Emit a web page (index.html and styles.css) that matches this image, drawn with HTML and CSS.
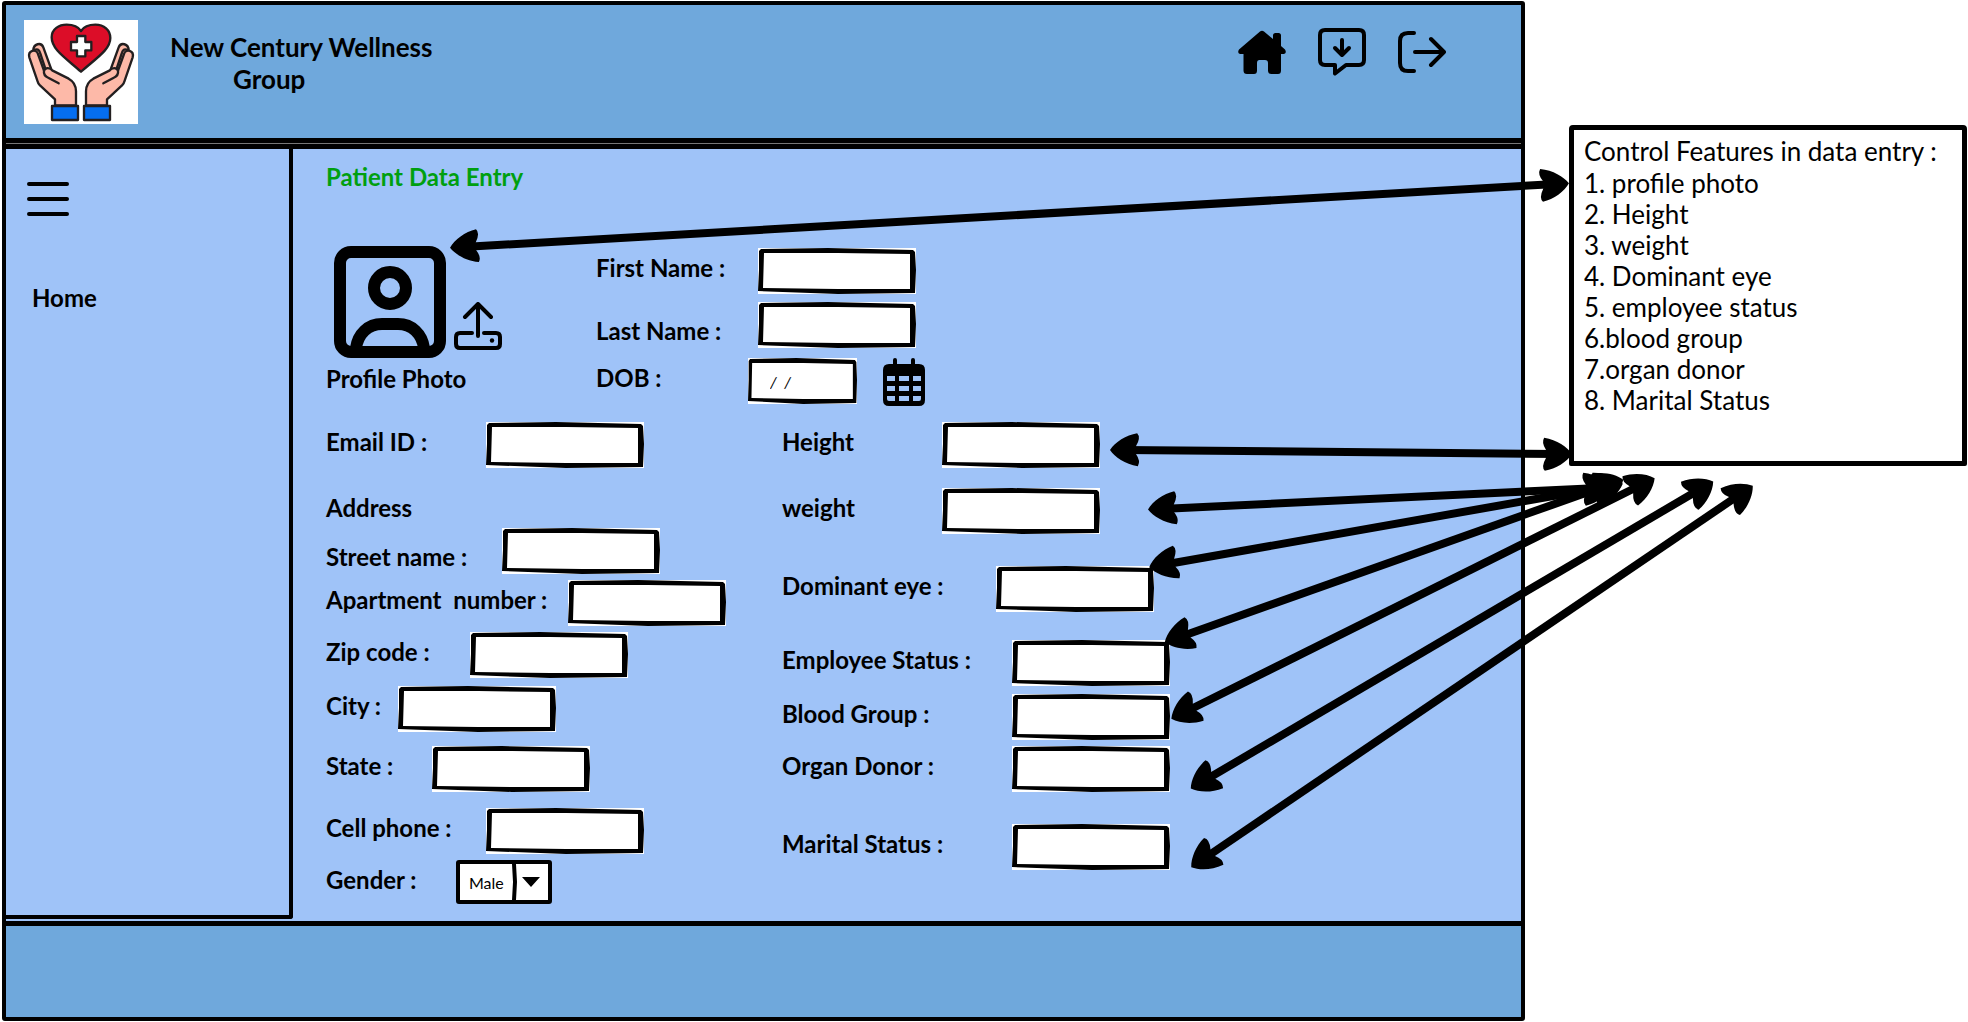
FILE: index.html
```html
<!DOCTYPE html>
<html lang="en">
<head>
<meta charset="utf-8">
<meta name="viewport" content="width=device-width, initial-scale=1">
<title>New Century Wellness Group – Patient Data Entry</title>
<link rel="stylesheet" href="styles.css">
</head>
<body>
<div class="board">
  <div class="app">
    <header class="topbar">
      <svg class="logo" viewBox="0 0 342 312" role="img" aria-label="New Century Wellness Group logo">
        <rect width="342" height="312" fill="#fff"/>
        <g stroke="#231f20" stroke-width="7" stroke-linejoin="round" stroke-linecap="round">
          <path fill="#dc0d28" d="M171 155C122 112 83 88 83 52C83 27 105 14 128 14C148 14 164 22 171 33C178 22 194 14 214 14C240 14 259 30 259 54C259 88 220 112 171 155Z"/>
          <path fill="#fff" d="M159 48h25v18h18v25h-18v18h-25v-18h-18v-25h18z"/>
          <g id="hand">
            <path fill="#fdb9a8" d="M28 92C28 70 52 66 58 82L82 148L60 164L36 100Z"/>
            <path fill="#fdb9a8" d="M93 256V238L48 196Q42 190 40 182L16 112C11 92 36 84 42 102L60 152C64 142 78 142 86 152L134 176Q156 188 156 214V256Z"/>
            <path fill="none" d="M60 152C58 164 64 170 74 174L104 190M30 90Q44 84 48 98L64 146"/>
            <path fill="#056ef0" d="M84 258h78v42h-78z"/>
          </g>
          <use href="#hand" transform="translate(342 0) scale(-1 1)"/>
        </g>
      </svg>
      <p class="brand">New Century Wellness<span class="brand-second">Group</span></p>
      <nav class="actions" aria-label="Account">
        <button type="button" aria-label="Home">
          <svg viewBox="0 0 48 48"><path d="M22 3.600Q24 2 26 3.600L35 11V7.500Q35 5 37.500 5H40.500Q43 5 43 7.500V18L47 21.500Q49 25 46 26H43V42.500Q43 46 40 46H33.500Q30 46 30 42.500V35Q30 32 27 32H21.500Q19 32 19 35V42.500Q19 46 16 46H9Q5.500 46 5.500 42.500V26H2Q-1 25 1 21.500Z"/></svg>
        </button>
        <button type="button" aria-label="Download messages">
          <svg viewBox="0 0 48 48"><path class="line" d="M17 37H7Q2 37 2 32V7Q2 2 7 2H41Q46 2 46 7V32Q46 37 41 37H28L17 45.500Z"/><path class="line" d="M24 12V26M17 20L24 27L31 20"/></svg>
        </button>
        <button type="button" aria-label="Log out">
          <svg viewBox="0 0 48 48"><path class="line" d="M16 5H10Q2 5 2 13V35Q2 43 10 43H16M17 24H45M33 11L46 24L33 37"/></svg>
        </button>
      </nav>
    </header>

    <div class="body">
      <aside class="sidebar">
        <button type="button" class="menu" aria-label="Menu">
          <svg viewBox="0 0 42 36"><path class="line" d="M2 3H40M2 18H40M2 33H40"/></svg>
        </button>
        <a class="nav-link" href="#home">Home</a>
      </aside>

      <main class="content">
        <h1>Patient Data Entry</h1>
        <form>
          <section class="identity">
            <div class="photo">
              <div class="photo-icons">
                <svg class="portrait" viewBox="0 0 112 112" role="img" aria-label="Profile photo"><g fill="none" stroke="#000" stroke-width="12"><rect x="6" y="6" width="100" height="100" rx="11"/><circle cx="56" cy="42" r="16"/><path d="M22 102C24 88 34 78 48 78H64C78 78 88 88 90 102"/></g></svg>
                <button type="button" class="upload" aria-label="Upload photo">
                  <svg viewBox="0 0 48 48"><path class="line" d="M18 31H6Q2 31 2 35V42Q2 46 6 46H42Q46 46 46 42V35Q46 31 42 31H30"/><path class="line" d="M24 34V3M11 15L24 2L37 15"/><circle cx="38" cy="38.500" r="2.200"/></svg>
                </button>
              </div>
              <span class="photo-label">Profile Photo</span>
            </div>
            <div class="names">
              <div class="field"><label class="w-162" for="first">First Name :</label><input class="box" id="first" type="text"></div>
              <div class="field low gap-8"><label class="w-162" for="last">Last Name :</label><input class="box" id="last" type="text"></div>
              <div class="field gap-10">
                <label class="w-152" for="dob">DOB :</label><input class="box date" id="dob" type="text" value="/  /">
                <button type="button" class="calendar" aria-label="Choose date">
                  <svg viewBox="0 0 42 48"><path d="M10 6V2Q10 0 12 0T14 2V6H28V2Q28 0 30 0T32 2V6H36Q42 6 42 12V42Q42 48 36 48H6Q0 48 0 42V12Q0 6 6 6Z"/><path fill="#9fc3f8" d="M4 18h8v5H4zM16 18h10v5H16zM30 18h8v5h-8zM4 28h8v5H4zM16 28h10v5H16zM30 28h8v5h-8zM4 38h8v5H6q-2 0-2-2zM16 38h10v5H16zM30 38h8v3q0 2-2 2h-6z"/></svg>
                </button>
              </div>
            </div>
          </section>

          <div class="columns">
            <div class="column">
              <div class="field"><label class="w-160" for="email">Email ID :</label><input class="box" id="email" type="email"></div>
              <h2 class="gap-20">Address</h2>
              <div class="field low"><label class="w-176" for="street">Street name :</label><input class="box" id="street" type="text"></div>
              <div class="field gap-6"><label class="w-242" for="apt">Apartment&nbsp; number :</label><input class="box" id="apt" type="text"></div>
              <div class="field gap-6"><label class="w-144" for="zip">Zip code :</label><input class="box" id="zip" type="text"></div>
              <div class="field gap-8"><label class="w-72" for="city">City :</label><input class="box" id="city" type="text"></div>
              <div class="field gap-14"><label class="w-106" for="state">State :</label><input class="box" id="state" type="text"></div>
              <div class="field gap-16"><label class="w-160" for="cell">Cell phone :</label><input class="box" id="cell" type="tel"></div>
              <div class="field gap-6"><label class="w-130" for="gender">Gender :</label><select id="gender"><option>Male</option><option>Female</option></select></div>
            </div>
            <div class="column">
              <div class="field"><label class="w-160" for="height">Height</label><input class="box" id="height" type="text"></div>
              <div class="field gap-20"><label class="w-160" for="weight">weight</label><input class="box" id="weight" type="text"></div>
              <div class="field gap-32"><label class="w-214" for="eye">Dominant eye :</label><input class="box" id="eye" type="text"></div>
              <div class="field gap-28"><label class="w-230" for="employee">Employee Status :</label><input class="box" id="employee" type="text"></div>
              <div class="field gap-8"><label class="w-230" for="blood">Blood Group :</label><input class="box" id="blood" type="text"></div>
              <div class="field gap-6"><label class="w-230" for="organ">Organ Donor :</label><input class="box" id="organ" type="text"></div>
              <div class="field gap-32"><label class="w-230" for="marital">Marital Status :</label><input class="box" id="marital" type="text"></div>
            </div>
          </div>
        </form>
      </main>
    </div>

    <footer class="bottombar"></footer>
  </div>

  <aside class="notes">
    <h2>Control Features in data entry :</h2>
    <ul>
      <li>1. profile photo</li>
      <li>2. Height</li>
      <li>3. weight</li>
      <li>4. Dominant eye</li>
      <li>5. employee status</li>
      <li>6.blood group</li>
      <li>7.organ donor</li>
      <li>8. Marital Status</li>
    </ul>
  </aside>

  <!-- Connectors between the fields and the notes -->
  <svg class="arrows" viewBox="0 0 1968 1022" aria-hidden="true">
    <defs>
      <marker id="head" viewBox="-32 -18 34 36" refX="-12" refY="0" markerWidth="34" markerHeight="36" markerUnits="userSpaceOnUse" orient="auto-start-reverse">
        <path d="M1 0C-4 -7 -14 -14 -27 -16Q-30 -11 -25 -4L-25 4Q-30 13 -26 17C-15 15 -4 8 1 0Z"/>
      </marker>
    </defs>
    <g class="connectors">
      <path d="M463 247L1556 184"/>
      <path d="M1123 450L1559 454"/>
      <path d="M1161 509L1599 488"/>
      <path d="M1162 565L1610 486"/>
      <path d="M1177 638L1611 484"/>
      <path d="M1183 713L1643 484"/>
      <path d="M1202 782L1702 488"/>
      <path d="M1202 860L1742 493"/>
    </g>
  </svg>
</div>
</body>
</html>
```
FILE: styles.css
```css
* {
  box-sizing: border-box;
}

body {
  margin: 0;
  background: #fff;
  color: #000;
  font-family: Lato, "Open Sans", sans-serif;
  font-size: 24px;
  font-weight: 700;
}

h1,
h2,
p,
ul {
  margin: 0;
  padding: 0;
  font-size: 24px;
}

button {
  padding: 0;
  border: 0;
  background: none;
  cursor: pointer;
}

svg {
  display: block;
}

.line {
  fill: none;
  stroke: #000;
  stroke-width: 4;
  stroke-linecap: round;
  stroke-linejoin: round;
}

.board {
  position: relative;
  display: flex;
  align-items: flex-start;
  gap: 44px;
  padding: 1px 1px 1px 2px;
}

.app {
  flex: 1;
  border: 4px solid #000;
  border-radius: 3px;
  background: #9fc3f8;
}

/* Header */

.topbar {
  display: flex;
  align-items: flex-start;
  padding: 15px 75px 14px 18px;
  border-bottom: 5px solid #000;
  background: #6fa8dc;
  box-shadow: 0 1px #777;
}

.logo {
  width: 114px;
  height: 104px;
}

.brand {
  margin: 11px auto 0 32px;
  font-size: 26px;
  line-height: 32px;
}

.brand-second {
  display: block;
  padding-left: 63px;
}

.actions {
  display: flex;
  gap: 32px;
  margin-top: 8px;
}

.actions svg,
.upload svg {
  width: 48px;
  height: 48px;
}

/* Body */

.body {
  display: flex;
  margin-top: 1px;
  border-top: 5px solid #000;
}

.sidebar {
  width: 287px;
  margin-bottom: 2px;
  padding: 32px 21px;
  border: solid #000;
  border-width: 0 4px 4px 0;
  border-radius: 0 0 3px 0;
}

.menu svg {
  width: 42px;
  height: 36px;
}

.nav-link {
  display: block;
  margin-top: 60px;
  padding-left: 5px;
  color: #000;
  line-height: 32px;
  text-decoration: none;
}

.content {
  flex: 1;
  padding: 11px 0 15px 33px;
}

h1 {
  margin-bottom: 52px;
  color: #009f10;
  line-height: 34px;
}

h2 {
  line-height: 40px;
}

/* Form */

.identity {
  display: flex;
}

.photo {
  width: 270px;
}

.photo-icons {
  display: flex;
  align-items: flex-end;
  gap: 8px;
  padding-left: 8px;
}

.portrait {
  width: 112px;
  height: 112px;
}

.upload {
  margin-bottom: 8px;
}

.photo-label {
  line-height: 42px;
}

.names {
  padding-top: 2px;
}

.columns {
  display: grid;
  grid-template-columns: 456px 1fr;
  margin-top: 18px;
}

.field {
  display: flex;
  align-items: flex-start;
  height: 46px;
}

.field label {
  flex: none;
  line-height: 40px;
  white-space: nowrap;
}

.low label {
  line-height: 58px;
}

.box {
  width: 158px;
  height: 46px;
  padding: 0 10px;
  border: 0;
  background: #fff url("data:image/svg+xml,%3Csvg xmlns='http://www.w3.org/2000/svg' viewBox='0 0 158 46' preserveAspectRatio='none'%3E%3Cpath fill-rule='evenodd' d='M1 3L3 1L70 0L155 2L157 4L158 22L157 45L80 46L0 43L1 22ZM6 5L5 40L80 41L152 41L152 23L152 6L80 5Z'/%3E%3C/svg%3E") 0 0 / 100% 100% no-repeat;
  color: #000;
  font: 400 16px Lato, "Open Sans", sans-serif;
}

.date {
  width: 109px;
  padding-left: 22px;
  font-style: italic;
  white-space: pre;
}

.calendar {
  margin-left: 26px;
}

.calendar svg {
  width: 42px;
  height: 48px;
}

select {
  width: 96px;
  height: 44px;
  padding: 0 0 0 9px;
  border: 4px solid #000;
  border-radius: 3px;
  appearance: none;
  background: #fff url("data:image/svg+xml,%3Csvg xmlns='http://www.w3.org/2000/svg' viewBox='0 0 36 36'%3E%3Cpath d='M0 0H4L5 18L4 36H0L1 18ZM10 13H28L19 23Z'/%3E%3C/svg%3E") right 0 top 0 / 36px 36px no-repeat;
  color: #000;
  font: 400 16px Lato, "Open Sans", sans-serif;
}

.w-72 { width: 72px; }
.w-106 { width: 106px; }
.w-130 { width: 130px; }
.w-144 { width: 144px; }
.w-152 { width: 152px; }
.w-160 { width: 160px; }
.w-162 { width: 162px; }
.w-176 { width: 176px; }
.w-214 { width: 214px; }
.w-230 { width: 230px; }
.w-242 { width: 242px; }

.gap-6 { margin-top: 6px; }
.gap-8 { margin-top: 8px; }
.gap-10 { margin-top: 10px; }
.gap-14 { margin-top: 14px; }
.gap-16 { margin-top: 16px; }
.gap-20 { margin-top: 20px; }
.gap-28 { margin-top: 28px; }
.gap-32 { margin-top: 32px; }

.bottombar {
  min-height: 96px;
  border-top: 5px solid #000;
  background: #6fa8dc;
}

/* Notes */

.notes {
  width: 398px;
  min-height: 340px;
  margin-top: 124px;
  padding: 6px 10px 45px;
  border: 5px solid #000;
  border-radius: 4px 4px 2px 2px;
}

.notes h2,
.notes ul {
  font-size: 26px;
  font-weight: 400;
  line-height: 31px;
}

.notes ul {
  padding-top: 1px;
  list-style: none;
}

/* Arrow overlay */

.arrows {
  position: absolute;
  top: 0;
  left: 0;
  width: 100%;
  pointer-events: none;
}

.connectors path {
  stroke: #000;
  stroke-width: 8;
  marker-start: url(#head);
  marker-end: url(#head);
}
```
